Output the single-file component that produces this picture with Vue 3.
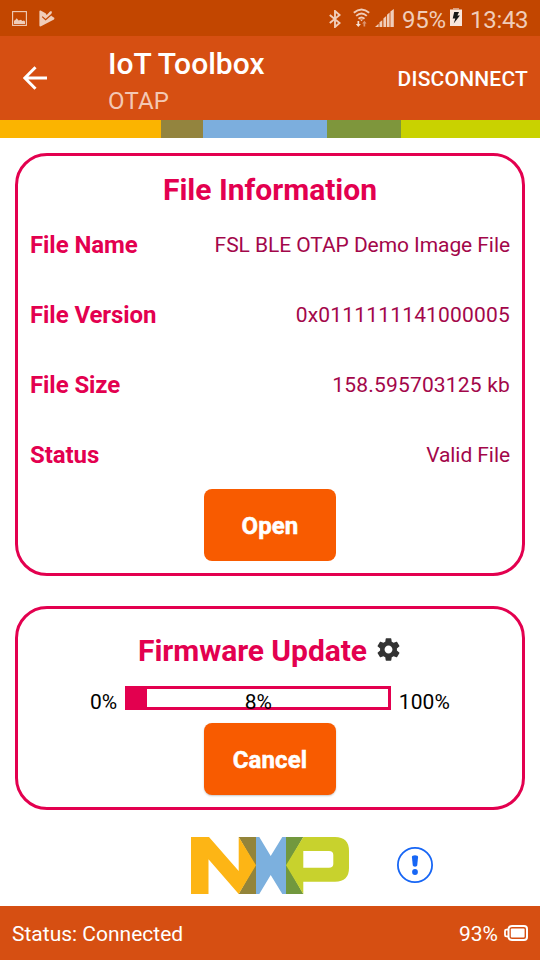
<script setup>
const stripes = [
  { color: '#fbb400', width: 161 },
  { color: '#93843e', width: 42 },
  { color: '#7caedd', width: 124 },
  { color: '#7e963c', width: 74 },
  { color: '#c9d200', width: 139 },
]
const fileInfo = [
  { label: 'File Name', value: 'FSL BLE OTAP Demo Image File' },
  { label: 'File Version', value: '0x0111111141000005', numeric: true },
  { label: 'File Size', value: '158.595703125 kb', numeric: true },
  { label: 'Status', value: 'Valid File' },
]
const progress = 8
</script>

<template>
  <div class="screen">
    <div class="statusbar">
      <svg class="sys-image" width="15" height="15" viewBox="0 0 15 15">
        <rect x=".6" y=".6" width="13.8" height="13.8" fill="none" stroke="#f0cdb9" stroke-width="1.1" />
        <path d="M2 13V9.8L3.3 9 4.7 7.3 6.6 9.4 9 8.8 10.3 10 12 9.5 13 10.5V13Z" fill="#f0cdb9" />
      </svg>
      <svg class="sys-play" width="16" height="17" viewBox="0 0 16 17">
        <path d="M.4 1.2Q.6.2 1.6.6L6.6 3.2 7.7 5 11.2 1.2 13 1.4 12.2 5.8 15.5 8 15 9.6 2 16.3Q.5 16.8.4 15.5Z" fill="#f0cdb9" />
        <path d="M3.2 6.6 6.6 9.6 13.4 3.8" fill="none" stroke="#c24600" stroke-width="1.2" />
      </svg>
      <span class="spacer"></span>
      <svg class="sys-bt" width="12" height="18" viewBox="0 0 12 18">
        <path d="M.8 5 10.6 13 6 17V1L10.6 5 .8 13" fill="none" stroke="#f0cdb9" stroke-width="1.9" />
      </svg>
      <svg class="sys-wifi" width="17" height="20" viewBox="0 0 17 20">
        <g fill="none" stroke="#f0cdb9" stroke-width="1.9">
          <path d="M.8 4.8Q8.5-1.8 16.2 4.8M3.2 7.9Q8.5 3.3 13.8 7.9M5.5 10.7Q8.5 8.2 11.5 10.7" />
        </g>
        <path d="M6.8 11.5h3.4L8.5 13.3Z" fill="#f0cdb9" />
        <path d="M4.5 13h1.7v3h1.7L5.3 19 2.8 16h1.7Z" fill="#f6dfd2" />
        <path d="M10.5 18.5h1.7v-3h1.4L11.4 12.8 9.1 15.5h1.4Z" fill="#dc9470" />
      </svg>
      <svg class="sys-signal" width="19" height="18" viewBox="0 0 19 18">
        <path d="M0 18 3.6 14.8V18ZM4.5 13.3 7.3 11.3V18H4.5ZM8.4 9.5 11.2 7V18H8.4ZM12 5.8 14.6 3.4V18H12ZM15.4 2.5 18.8 0V18H15.4Z" fill="#f0cdb9" />
      </svg>
      <span class="sys-text percent">95%</span>
      <svg class="sys-battery" width="12" height="18" viewBox="0 0 12 18">
        <path d="M3 0H9V1.5H3Z" fill="#dc9f80" />
        <path d="M0 1.5H12V18H0Z" fill="#f8e6dc" />
        <path d="M4.2 4H9L7.4 7.4H9.9L3.7 15.5 5.3 10.6H2.7Z" fill="#151515" />
      </svg>
      <span class="sys-text clock">13:43</span>
    </div>

    <header class="toolbar">
      <svg class="back" width="25" height="24" viewBox="0 0 25 24">
        <path d="M24 12H2M12.5 1.2 1.8 12 12.5 22.8" fill="none" stroke="#fff" stroke-width="3" />
      </svg>
      <div class="titles">
        <div class="title">IoT Toolbox</div>
        <div class="subtitle">OTAP</div>
      </div>
      <div class="disconnect">DISCONNECT</div>
    </header>

    <div class="stripes">
      <span v-for="s in stripes" :key="s.color" :style="{ width: s.width + 'px', background: s.color }"></span>
    </div>

    <main>
      <section class="card file">
        <h2><span>File Information</span></h2>
        <div v-for="row in fileInfo" :key="row.label" class="row">
          <span class="label">{{ row.label }}</span>
          <span class="value" :class="{ numeric: row.numeric }">{{ row.value }}</span>
        </div>
        <button>Open</button>
      </section>

      <section class="card firmware">
        <h2>
          <span>Firmware Update</span>
          <svg class="gear" width="27" height="27" viewBox="0 0 24 24">
            <path fill="#333" d="M19.43 12.98c.04-.32.07-.64.07-.98s-.03-.66-.07-.98l2.11-1.65c.19-.15.24-.42.12-.64l-2-3.46c-.12-.22-.39-.3-.61-.22l-2.49 1c-.52-.4-1.08-.73-1.69-.98l-.38-2.65C14.46 2.18 14.25 2 14 2h-4c-.25 0-.46.18-.49.42l-.38 2.65c-.61.25-1.17.59-1.69.98l-2.49-1c-.23-.09-.49 0-.61.22l-2 3.46c-.13.22-.07.49.12.64l2.11 1.65c-.04.32-.07.65-.07.98s.03.66.07.98l-2.11 1.65c-.19.15-.24.42-.12.64l2 3.46c.12.22.39.3.61.22l2.49-1c.52.4 1.08.73 1.69.98l.38 2.65c.03.24.24.42.49.42h4c.25 0 .46-.18.49-.42l.38-2.65c.61-.25 1.17-.59 1.69-.98l2.49 1c.23.09.49 0 .61-.22l2-3.46c.12-.22.07-.49-.12-.64l-2.11-1.65zM12 15.5c-1.93 0-3.5-1.57-3.5-3.5s1.57-3.5 3.5-3.5 3.5 1.57 3.5 3.5-1.57 3.5-3.5 3.5z" />
          </svg>
        </h2>
        <div class="progress">
          <span class="min">0%</span>
          <div class="bar">
            <div class="fill" :style="{ width: progress + '%' }"></div>
            <span class="current">{{ progress }}%</span>
          </div>
          <span class="max">100%</span>
        </div>
        <button class="cancel">Cancel</button>
      </section>
    </main>

    <div class="brand">
      <svg class="logo" width="158" height="57" viewBox="0 0 158 57">
        <path d="M47.7 0H65V57H47.7L64 28.3Z" fill="#93843a" />
        <path d="M0 0H18L47.7 34V0L65 28.3 47.7 57 17.5 22.3V57H0Z" fill="#fdb515" />
        <path d="M65 0H68.3L79.7 19 91.3 0H95V57H91.3L79.7 38 68.3 57H65Z" fill="#7cb0de" />
        <path d="M95 0H112.3L96 28.3 112.3 57H95Z" fill="#72983e" />
        <path d="M112.3 0H144Q158 0 158 14V31Q158 44.7 144 44.7H112.3V57L95 28.3ZM112.3 14V30.7H138Q142.3 30.7 142.3 27V18Q142.3 14 138 14Z" fill="#c8d22d" fill-rule="evenodd" />
      </svg>
      <svg class="info" width="36" height="36" viewBox="0 0 36 36">
        <circle cx="18" cy="18" r="17.1" fill="none" stroke="#1766f5" stroke-width="1.8" />
        <path d="M14.9 10Q14.9 8.2 18 8.2T21.1 10L20.2 18.6Q20 19.7 18 19.7T15.8 18.6Z" fill="#1766f5" />
        <circle cx="18" cy="25" r="2.9" fill="#1766f5" />
      </svg>
    </div>

    <footer>
      <span class="connection">Status: Connected</span>
      <span class="level">93%</span>
      <svg class="charge" width="24" height="16" viewBox="0 0 24 16">
        <path d="M4.5 3.6Q5 1 8 1H20Q23 1 23 4V12Q23 15 20 15H8Q5 15 4.5 12.4M4.5 3.6V12.4" fill="none" stroke="#fff" stroke-width="2" />
        <path d="M4.3 4.7H2.2Q1 4.7 1 6V10Q1 11.3 2.2 11.3H4.3" fill="none" stroke="#fff" stroke-width="1.8" />
        <rect x="6.8" y="3.4" width="13.8" height="9.2" rx="1" fill="#fff" />
      </svg>
    </footer>
  </div>
</template>

<style>
body { margin: 0; background: #fff; }
</style>

<style scoped>
.screen {
  box-sizing: border-box;
  width: 540px;
  height: 960px;
  display: flex;
  flex-direction: column;
  background: #fff;
  font-family: Roboto, sans-serif;
  overflow: hidden;
}
svg { display: block; flex: none; }
span, .title, .subtitle, .disconnect { white-space: nowrap; }
.statusbar {
  height: 36px;
  flex: none;
  display: flex;
  align-items: flex-start;
  background: #c24600;
  color: #f0cdb9;
}
.sys-image { margin: 11px 0 0 12px; }
.sys-play { margin: 10px 0 0 12px; }
.spacer { flex: 1; }
.sys-bt { margin: 10px 12px 0 0; }
.sys-wifi { margin: 8px 5px 0 0; }
.sys-signal { margin: 9px 8px 0 0; }
.sys-text { font-size: 24px; line-height: 28px; margin-top: 6px; letter-spacing: -0.3px; }
.percent { width: 43px; }
.sys-battery { margin: 8px 8px 0 5px; }
.clock { width: 57px; margin-right: 13px; }
.toolbar {
  height: 84px;
  flex: none;
  display: flex;
  background: #d64f12;
  color: #fff;
}
.back { margin: 30px 0 0 23px; }
.titles { flex: 1; margin-left: 60px; }
.title { font-size: 30px; line-height: 36px; font-weight: 500; margin-top: 10px; }
.subtitle { font-size: 24px; line-height: 28px; margin-top: 5px; color: #f3c8b4; letter-spacing: 0.2px; }
.disconnect { font-size: 21px; line-height: 24px; font-weight: 500; letter-spacing: 0.2px; margin: 31px 12px 0 0; }
.stripes { height: 18px; flex: none; display: flex; }
main {
  display: flex;
  flex-direction: column;
  gap: 30px;
  padding: 15px 15px 0;
}
.card {
  box-sizing: border-box;
  border: 3px solid #e3004f;
  border-radius: 32px;
  padding: 0 12px;
  display: flex;
  flex-direction: column;
}
.file { height: 423px; }
.firmware { height: 204px; }
h2 {
  margin: 0;
  display: flex;
  justify-content: center;
  font-size: 30px;
  line-height: 36px;
  font-weight: 700;
  color: #e3004f;
}
.file h2 { margin-top: 16px; margin-bottom: 2px; }
.firmware h2 { margin-top: 24px; gap: 8px; letter-spacing: -0.05px; }
.gear { margin-top: 3px; }
.row {
  height: 70px;
  display: flex;
  justify-content: space-between;
  align-items: center;
}
.label { font-size: 24px; font-weight: 700; color: #e3004f; letter-spacing: -0.08px; }
.value { font-size: 21px; color: #a3074a; letter-spacing: -0.07px; }
.value.numeric { letter-spacing: 0.18px; }
button {
  align-self: center;
  width: 132px;
  height: 72px;
  flex: none;
  border: 0;
  border-radius: 8px;
  padding: 2px 0 0;
  background: #f85b00;
  color: #fff;
  font: 700 24px/28px Roboto, sans-serif;
  -webkit-text-stroke: 0.5px #fff;
  letter-spacing: 0.1px;
}
.file button { margin-top: -1px; }
.cancel { box-shadow: 0 1px 2px rgba(0, 0, 0, 0.22); }
.progress {
  display: flex;
  width: 360px;
  align-self: center;
  margin-top: 17px;
  height: 37px;
  color: #000;
  font-size: 21px;
  line-height: 24px;
}
.min { width: 35px; margin-top: 4px; }
.max { margin: 4px 0 0 8px; letter-spacing: 0.1px; }
.bar {
  box-sizing: border-box;
  position: relative;
  width: 266px;
  height: 24px;
  border: 3px solid #e3004f;
}
.fill { height: 100%; margin-left: -2px; background: #e3004f; }
.current { position: absolute; top: 1px; left: 1px; right: 0; text-align: center; }
.brand { display: flex; height: 96px; flex: none; }
.logo { margin: 27px 0 0 191px; }
.info { margin: 37px 0 0 48px; }
footer {
  height: 54px;
  flex: none;
  display: flex;
  align-items: center;
  padding: 0 12px;
  background: #d64f12;
  color: #fff;
  font-size: 21px;
}
.connection { flex: 1; padding-top: 2px; }
.level { margin-right: 6px; padding-top: 2px; }
</style>
